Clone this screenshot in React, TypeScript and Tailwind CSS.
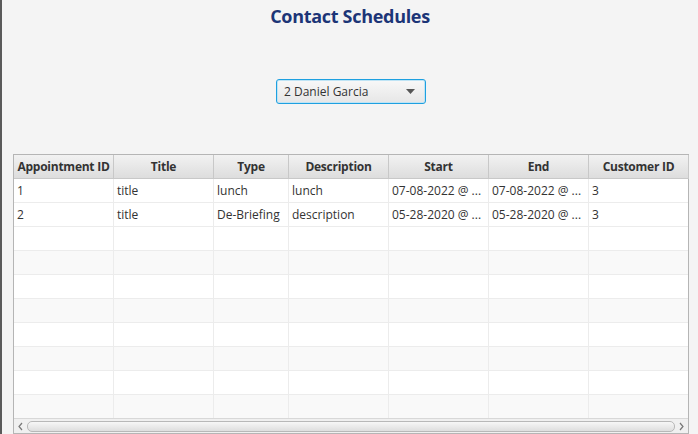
import React from "react";

const cols = [
  { name: "Appointment ID", w: 100 },
  { name: "Title", w: 100 },
  { name: "Type", w: 75 },
  { name: "Description", w: 100 },
  { name: "Start", w: 100 },
  { name: "End", w: 100 },
  { name: "Customer ID", w: 100 },
];

const rows = [
  ["1", "title", "lunch", "lunch", "07-08-2022 @ ...", "07-08-2022 @ ...", "3"],
  ["2", "title", "De-Briefing", "description", "05-28-2020 @ ...", "05-28-2020 @ ...", "3"],
];

export default function App() {
  const allRows: string[][] = [...rows];
  while (allRows.length < 10) allRows.push(["", "", "", "", "", "", ""]);
  return (
    <div
      className="w-[698px] h-[434px] bg-[#f4f4f4] flex overflow-hidden"
      style={{ fontFamily: '"Open Sans", "Noto Sans", sans-serif' }}
    >
      <div className="w-[2px] h-full bg-[#5a5a5a]" />
      <div className="flex-1 flex flex-col">
        <div className="h-[33px] flex justify-center items-start pt-[3px]">
          <span className="text-[18px] font-bold text-[#1c3577] tracking-[-0.3px]">Contact Schedules</span>
        </div>
        <div className="h-[121px] flex justify-center items-start pt-[46px] pl-[2px]">
          <div className="w-[150px] h-[25px] border border-[#1ea0e0] rounded-[3px] bg-gradient-to-b from-[#f8f8f8] to-[#e6e6e6] flex items-center pl-[7px] pr-[10px] shadow-[inset_0_0_0_1px_#bfe4f5]">
            <span className="text-[12px] text-[#333] flex-1">2 Daniel Garcia</span>
            <svg width="9" height="5" viewBox="0 0 9 5"><path d="M0 0H9L4.5 5Z" fill="#555" /></svg>
          </div>
        </div>
        <div className="ml-[11px] w-[676px] flex-1 min-h-0 border border-[#b5b5b5] bg-white flex flex-col">
          <div className="flex h-[24px] shrink-0">
            {cols.map((c, i) => (
              <div
                key={i}
                style={{ width: c.w }}
                className="h-full shrink-0 bg-gradient-to-b from-[#f2f2f2] to-[#dddddd] border-r border-b border-[#c8c8c8] flex items-center justify-center text-[12px] font-bold text-[#333] tracking-[-0.25px]"
              >
                {c.name}
              </div>
            ))}
          </div>
          <div className="flex-1 min-h-0 flex flex-col overflow-hidden">
            {allRows.map((r, ri) => (
              <div key={ri} className={`flex h-[24px] shrink-0 ${ri % 2 === 1 && ri > 1 ? "bg-[#f9f9f9]" : "bg-white"}`}>
                {r.map((v, ci) => (
                  <div
                    key={ci}
                    style={{ width: cols[ci].w }}
                    className="h-full shrink-0 border-r border-b border-[#ececec] flex items-center pl-[3px] text-[12px] text-[#333] whitespace-nowrap overflow-hidden"
                  >
                    {v}
                  </div>
                ))}
              </div>
            ))}
          </div>
          <div className="h-[15px] shrink-0 bg-[#f0f0f0] border-t border-[#d8d8d8] flex items-center px-[3px] gap-[3px]">
            <svg width="7" height="9" viewBox="0 0 7 9"><path d="M5 1L2 4.5L5 8" stroke="#777" strokeWidth="1.2" fill="none" /></svg>
            <div className="flex-1 h-[11px] rounded-[5px] border border-[#b8b8b8] bg-gradient-to-b from-[#f7f7f7] to-[#dedede]" />
            <svg width="7" height="9" viewBox="0 0 7 9"><path d="M2 1L5 4.5L2 8" stroke="#777" strokeWidth="1.2" fill="none" /></svg>
          </div>
        </div>
      </div>
    </div>
  );
}
